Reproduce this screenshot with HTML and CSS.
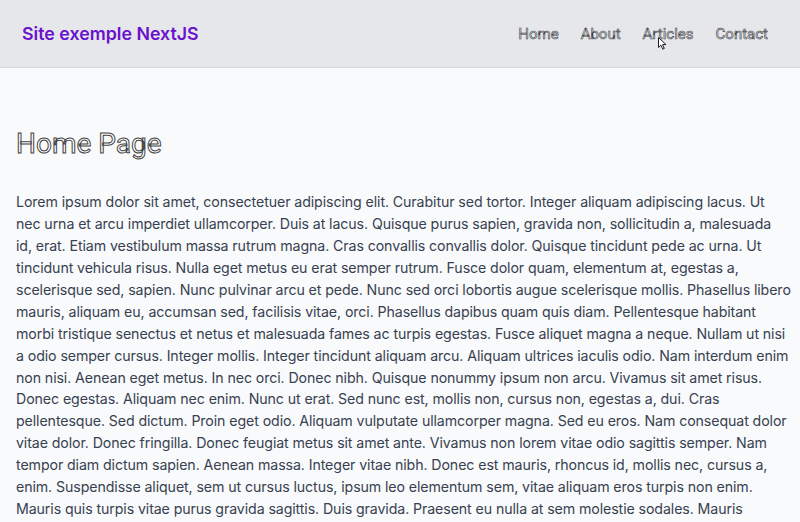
FILE: index.html
```html
<!DOCTYPE html>
<html lang="fr">
<head>
<meta charset="utf-8">
<title>Site exemple NextJS</title>
<link rel="stylesheet" href="styles.css">
</head>
<body>
<header class="site-header">
  <a class="brand" href="#">Site exemple NextJS</a>
  <nav class="nav">
    <a href="#">Home</a>
    <a href="#">About</a>
    <a href="#" class="hovered">Articles<svg class="cursor" width="9" height="13" viewBox="0 0 9 13"><path d="M0.5 0.5 L0.5 10.5 L3 8.2 L4.8 12.2 L6.3 11.5 L4.6 7.6 L8 7.6 Z" fill="#fff" stroke="#222" stroke-width="1"/></svg></a>
    <a href="#">Contact</a>
  </nav>
</header>
<main class="content">
  <h1 class="title">Home Page</h1>
  <p class="text">Lorem ipsum dolor sit amet, consectetuer adipiscing elit. Curabitur sed tortor. Integer aliquam adipiscing lacus. Ut nec urna et arcu imperdiet ullamcorper. Duis at lacus. Quisque purus sapien, gravida non, sollicitudin a, malesuada id, erat. Etiam vestibulum massa rutrum magna. Cras convallis convallis dolor. Quisque tincidunt pede ac urna. Ut tincidunt vehicula risus. Nulla eget metus eu erat semper rutrum. Fusce dolor quam, elementum at, egestas a, scelerisque sed, sapien. Nunc pulvinar arcu et pede. Nunc sed orci lobortis augue scelerisque mollis. Phasellus libero mauris, aliquam eu, accumsan sed, facilisis vitae, orci. Phasellus dapibus quam quis diam. Pellentesque habitant morbi tristique senectus et netus et malesuada fames ac turpis egestas. Fusce aliquet magna a neque. Nullam ut nisi a odio semper cursus. Integer mollis. Integer tincidunt aliquam arcu. Aliquam ultrices iaculis odio. Nam interdum enim non nisi. Aenean eget metus. In nec orci. Donec nibh. Quisque nonummy ipsum non arcu. Vivamus sit amet risus. Donec egestas. Aliquam nec enim. Nunc ut erat. Sed nunc est, mollis non, cursus non, egestas a, dui. Cras pellentesque. Sed dictum. Proin eget odio. Aliquam vulputate ullamcorper magna. Sed eu eros. Nam consequat dolor vitae dolor. Donec fringilla. Donec feugiat metus sit amet ante. Vivamus non lorem vitae odio sagittis semper. Nam tempor diam dictum sapien. Aenean massa. Integer vitae nibh. Donec est mauris, rhoncus id, mollis nec, cursus a, enim. Suspendisse aliquet, sem ut cursus luctus, ipsum leo elementum sem, vitae aliquam eros turpis non enim. Mauris quis turpis vitae purus gravida sagittis. Duis gravida. Praesent eu nulla at sem molestie sodales. Mauris</p>
</main>
</body>
</html>
```
FILE: styles.css
```css
* { box-sizing: border-box; }
html, body { margin: 0; padding: 0; }
body {
  background: #f9fafb;
  font-family: Inter, Roboto, "Noto Sans", sans-serif;
  color: #374151;
  overflow: hidden;
}
.site-header {
  height: 68px;
  background: #e5e7eb;
  border-bottom: 1px solid #d6d8dc;
  display: flex;
  align-items: center;
  justify-content: space-between;
  padding: 0 32px 0 22px;
}
.brand {
  font-family: Inter, Roboto, sans-serif;
  font-size: 17.8px;
  font-weight: 600;
  color: #6a12cc;
  text-decoration: none;
}
.nav {
  display: flex;
  gap: 22px;
}
.nav a {
  font-family: Roboto, Inter, sans-serif;
  font-size: 15px;
  color: #e5e7eb;
  -webkit-text-stroke: 0.6px #3f3f46;
  text-decoration: none;
}
.nav a.hovered { position: relative; }
.cursor {
  position: absolute;
  left: 15px;
  top: 12px;
}
.content {
  padding: 59px 0 0 16px;
}
.title {
  margin: 0 0 31px;
  font-family: Roboto, Inter, sans-serif;
  font-size: 28px;
  line-height: 33px;
  font-weight: 400;
  color: #ffffff;
  -webkit-text-stroke: 1px #444;
}
.text {
  margin: 0;
  width: 774.9px;
  font-size: 14.2px;
  letter-spacing: -0.1px;
  line-height: 21.93px;
  color: #374151;
}
```
